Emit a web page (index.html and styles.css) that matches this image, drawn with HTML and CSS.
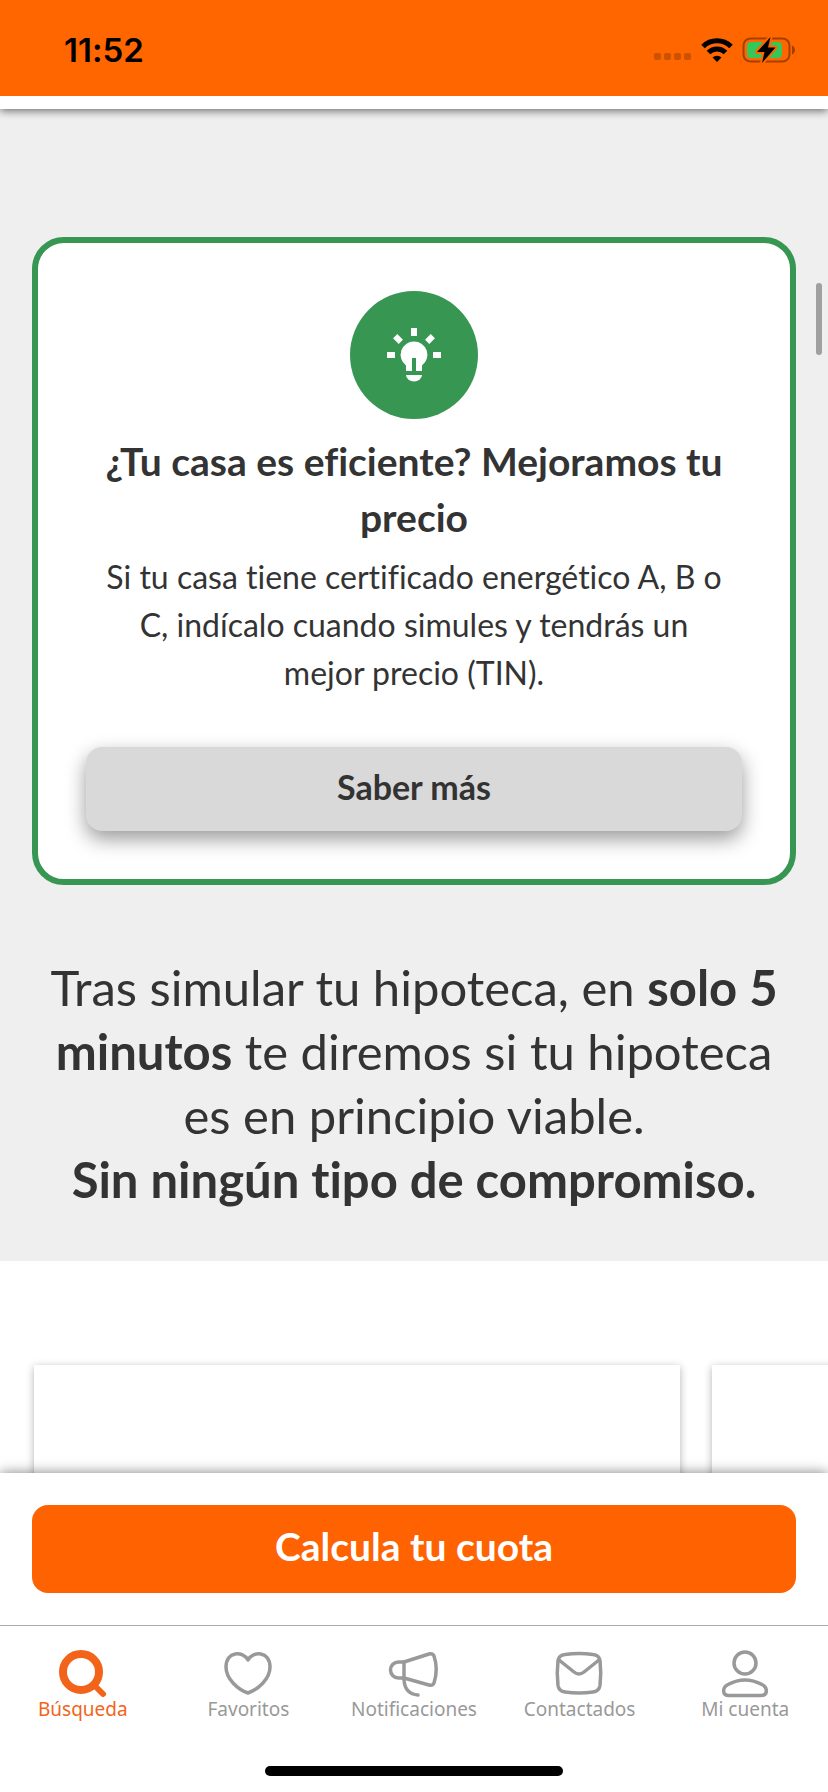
FILE: index.html
```html
<!DOCTYPE html>
<html lang="es">

<head>
    <meta charset="UTF-8">
    <meta name="viewport" content="width=device-width, initial-scale=1.0">
    <title>Hipoteca</title>
    <link rel="stylesheet" href="styles.css">
</head>

<body>

    <div class="status-bar">
        <span class="time">11:52</span>
        <div class="status-icons">
            <svg width="38" height="8" viewBox="0 0 38 8" fill="#cc5200">
                <rect x="0" y="0" width="7" height="7" rx="2" />
                <rect x="10" y="0" width="7" height="7" rx="2" />
                <rect x="20" y="0" width="7" height="7" rx="2" />
                <rect x="30" y="0" width="7" height="7" rx="2" />
            </svg>
            <svg class="wifi" width="32" height="24" viewBox="0 0 32 24" fill="none" stroke="#000" stroke-width="5">
                <path d="M2 8.500a20 20 0 0 1 28 0" />
                <path d="M7.500 14.500a12 12 0 0 1 17 0" />
                <path d="M16 24l-4.500-4.500a6.400 6.400 0 0 1 9 0z" fill="#000" stroke="none" />
            </svg>
            <svg width="54" height="28" viewBox="0 0 54 28">
                <rect x="1.500" y="2.500" width="46" height="23" rx="7" fill="none" stroke="#a34000" stroke-width="2" />
                <path d="M50 9.500c4 1.500 4 7.500 0 9z" fill="#a34000" />
                <rect x="5" y="6" width="35" height="16" rx="4" fill="#34c759" />
                <path d="M28.500 1L15 16h7.500L20 27l13.500-15.500H26z" fill="#000" stroke="#ff6600" stroke-width="4" stroke-linejoin="round" paint-order="stroke" />
            </svg>
        </div>
    </div>

    <div class="top-strip"></div>

    <main>
        <section class="intro">
            <div class="card">
                <div class="bulb">
                    <svg width="54" height="54" viewBox="0 0 54 54" fill="#fff">
                        <rect x="24" y="0" width="6" height="8" />
                        <rect x="0" y="24" width="8" height="6" />
                        <rect x="46" y="24" width="8" height="6" />
                        <rect x="-4" y="-3" width="8" height="6" transform="translate(11 11) rotate(45)" />
                        <rect x="-4" y="-3" width="8" height="6" transform="translate(43 11) rotate(-45)" />
                        <path d="M27 13.500a13.300 13.300 0 0 0-8 24V43h6V30h4v13h6v-5.500a13.300 13.300 0 0 0-8-24z" />
                        <path d="M19 47h16a8 6.500 0 0 1-16 0z" />
                    </svg>
                </div>
                <h2>¿Tu casa es eficiente? Mejoramos tu precio</h2>
                <p>Si tu casa tiene certificado energético A, B o C, indícalo cuando simules y tendrás un mejor precio (TIN).</p>
                <button class="more" type="button">Saber más</button>
            </div>

            <p class="lead">
                Tras simular tu hipoteca, en <b>solo 5 minutos</b> te diremos si tu hipoteca es en principio viable.<br>
                <b>Sin ningún tipo de compromiso.</b>
            </p>
        </section>

        <section class="slider">
            <div class="slide"></div>
            <div class="slide"></div>
        </section>
        <div class="scroll-thumb"></div>
    </main>

    <div class="cta">
        <button type="button">Calcula tu cuota</button>
    </div>

    <nav>
        <a class="active" href="#busqueda">
            <svg width="48" height="48" viewBox="0 0 48 48" fill="none" stroke="currentColor">
                <circle cx="22" cy="22" r="18" stroke-width="8" />
                <path d="M36 36l8 8" stroke-width="6" stroke-linecap="round" />
            </svg>
            Búsqueda
        </a>
        <a href="#favoritos">
            <svg width="48" height="48" viewBox="0 0 48 48" fill="none" stroke="currentColor" stroke-width="3.500" stroke-linejoin="round">
                <path d="M24 10C19 .5 2 1 2 17C2 29 14 39.500 24 43C34 39.500 46 29 46 17C46 1 29 .5 24 10z" />
            </svg>
            Favoritos
        </a>
        <a href="#notificaciones">
            <svg width="48" height="48" viewBox="0 0 48 48" fill="none" stroke="currentColor" stroke-width="3.500" stroke-linecap="round" stroke-linejoin="round">
                <path d="M14 12L39 4q3.500-1 5 2q4.500 13 0 27q-1.500 3-5 2L14 28H8.500a8 8 0 0 1 0-16z" />
                <path d="M14 12v18q1 14 14 15" />
            </svg>
            Notificaciones
        </a>
        <a href="#contactados">
            <svg width="48" height="48" viewBox="0 0 48 48" fill="none" stroke="currentColor" stroke-width="3.500" stroke-linecap="round">
                <path d="M9 4.500q14-2 28 0q6 .5 7 6q1.500 13 0 25q-1 6-7 6.500q-14 2-28 0q-6-.5-7-6.500q-1.500-12 0-25q1-5.500 7-6z" />
                <path d="M3 10l15 12q5 4 10 0l15-12" />
            </svg>
            Contactados
        </a>
        <a href="#cuenta">
            <svg width="48" height="48" viewBox="0 0 48 48" fill="none" stroke="currentColor" stroke-width="3.500">
                <circle cx="24" cy="13" r="11" />
                <path d="M8 45.500h32c7 0 7-8 1-11q-17-9-34 0c-6 3-6 11 1 11z" />
            </svg>
            Mi cuenta
        </a>
    </nav>

    <div class="home-bar"></div>

</body>

</html>
```
FILE: styles.css
```css
* {
    box-sizing: border-box;
}

body {
    margin: 0;
    height: 100vh;
    display: flex;
    flex-direction: column;
    background: #fff;
    color: #333;
    font-family: Lato, "Open Sans", sans-serif;
    font-variant-ligatures: none;
}

button {
    display: block;
    width: 100%;
    padding: 0 0 6px;
    border: none;
    border-radius: 16px;
    font-family: inherit;
    font-weight: bold;
    cursor: pointer;
}

/* status bar */
.status-bar {
    position: relative;
    z-index: 2;
    display: flex;
    justify-content: space-between;
    align-items: center;
    height: 96px;
    padding: 4px 32px 0 64px;
    background: #ff6600;
    color: #000;
}

.time {
    font-family: Inter, sans-serif;
    font-size: 33px;
    font-weight: 600;
}

.status-icons {
    display: flex;
    align-items: center;
    gap: 9px;
}

.status-icons svg:first-child {
    margin-top: 14px;
}

.top-strip {
    position: relative;
    z-index: 1;
    height: 13px;
    background: #fff;
    box-shadow: 0 2px 8px rgba(0, 0, 0, 0.55);
}

/* scrolling content */
main {
    position: relative;
    flex: 1;
    min-height: 0;
    overflow-y: auto;
    scrollbar-width: none;
}

.scroll-thumb {
    position: absolute;
    top: 174px;
    right: 6px;
    width: 6px;
    height: 72px;
    border-radius: 3px;
    background: #a0a0a0;
}

.intro {
    padding: 128px 32px 50px;
    background: #efefef;
    text-align: center;
}

.card {
    padding: 48px;
    border: 6px solid #379652;
    border-radius: 32px;
    background: #fff;
}

.bulb {
    display: flex;
    justify-content: center;
    align-items: center;
    width: 128px;
    height: 128px;
    margin: 0 auto 14px;
    border-radius: 50%;
    background: #379652;
}

.card h2 {
    margin: 0;
    font-size: 39px;
    line-height: 56px;
}

.card p {
    margin: 8px 0 50px;
    padding: 0 12px;
    font-size: 32px;
    line-height: 48px;
}

.more {
    height: 84px;
    background: #d9d9d9;
    color: #333;
    font-size: 34px;
    box-shadow: 0 8px 20px rgba(0, 0, 0, 0.4);
}

.lead {
    margin: 70px 0 0;
    padding: 0 8px;
    font-size: 49px;
    line-height: 64px;
}

.slider {
    display: flex;
    gap: 32px;
    padding: 104px 34px;
    overflow: hidden;
}

.slide {
    flex: 0 0 85%;
    height: 400px;
    background: #fff;
    box-shadow: 0 2px 8px rgba(0, 0, 0, 0.3);
}

/* bottom */
.cta {
    position: relative;
    padding: 32px;
    background: #fff;
    box-shadow: 0 0 12px rgba(0, 0, 0, 0.5);
}

.cta button {
    height: 88px;
    background: #ff6200;
    color: #fff;
    font-size: 39px;
}

nav {
    position: relative;
    display: grid;
    grid-template-columns: repeat(5, 1fr);
    padding: 24px 0 46px;
    border-top: 1px solid #aaa;
    background: #fff;
}

nav a {
    display: flex;
    flex-direction: column;
    align-items: center;
    color: #999;
    font-family: "Noto Sans", sans-serif;
    font-size: 19px;
    line-height: 22px;
    text-decoration: none;
}

nav svg {
    overflow: visible;
}

nav a.active {
    color: #f26419;
}

.home-bar {
    width: 36%;
    height: 10px;
    margin: 0 auto 16px;
    border-radius: 5px;
    background: #000;
}
```
